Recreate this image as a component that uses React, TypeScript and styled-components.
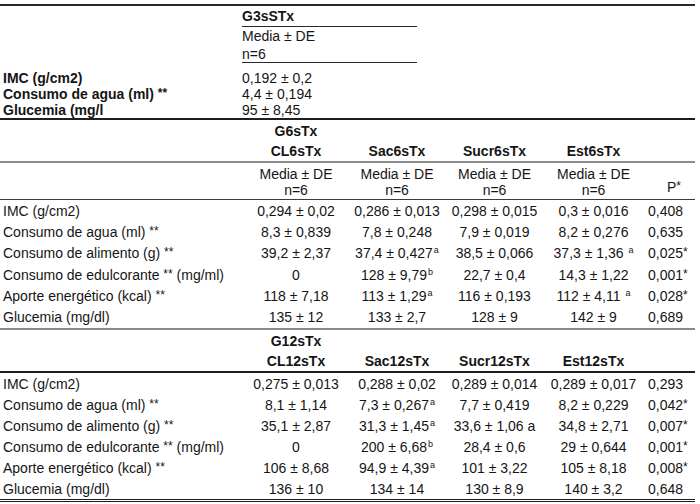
import React from 'react';
import styled, { createGlobalStyle } from 'styled-components';

const GlobalStyle = createGlobalStyle`
  html, body {
    margin: 0;
    padding: 0;
    background: #ffffff;
  }
  body {
    font-family: 'Liberation Sans', Arial, sans-serif;
    color: #151515;
  }
`;

type Row = { label: string; values: string[] };

const week6: Row[] = [
    { label: 'IMC (g/cm2)', values: ['0,294 ± 0,02', '0,286 ± 0,013', '0,298 ± 0,015', '0,3 ± 0,016', '0,408'] },
    { label: 'Consumo de agua (ml) **', values: ['8,3 ± 0,839', '7,8 ± 0,248', '7,9 ± 0,019', '8,2 ± 0,276', '0,635'] },
    { label: 'Consumo de alimento (g) **', values: ['39,2 ± 2,37', '37,4 ± 0,427^a', '38,5 ± 0,066', '37,3 ± 1,36 ^a', '0,025*'] },
    { label: 'Consumo de edulcorante ** (mg/ml)', values: ['0', '128 ± 9,79^b', '22,7 ± 0,4', '14,3 ± 1,22', '0,001*'] },
    { label: 'Aporte energético (kcal) **', values: ['118 ± 7,18', '113 ± 1,29^a', '116 ± 0,193', '112 ± 4,11 ^a', '0,028*'] },
    { label: 'Glucemia (mg/dl)', values: ['135 ± 12', '133 ± 2,7', '128 ± 9', '142 ± 9', '0,689'] },
];

const week12: Row[] = [
    { label: 'IMC (g/cm2)', values: ['0,275 ± 0,013', '0,288 ± 0,02', '0,289 ± 0,014', '0,289 ± 0,017', '0,293'] },
    { label: 'Consumo de agua (ml) **', values: ['8,1 ± 1,14', '7,3 ± 0,267^a', '7,7 ± 0,419', '8,2 ± 0,229', '0,042*'] },
    { label: 'Consumo de alimento (g) **', values: ['35,1 ± 2,87', '31,3 ± 1,45^a', '33,6 ± 1,06 a', '34,8 ± 2,71', '0,007*'] },
    { label: 'Consumo de edulcorante ** (mg/ml)', values: ['0', '200 ± 6,68^b', '28,4 ± 0,6', '29 ± 0,644', '0,001*'] },
    { label: 'Aporte energético (kcal) **', values: ['106 ± 8,68', '94,9 ± 4,39^a', '101 ± 3,22', '105 ± 8,18', '0,008*'] },
    { label: 'Glucemia (mg/dl)', values: ['136 ± 10', '134 ± 14', '130 ± 8,9', '140 ± 3,2', '0,648'] },
];

const week3: Row[] = [
    { label: 'IMC (g/cm2)', values: ['0,192 ± 0,2'] },
    { label: 'Consumo de agua (ml) **', values: ['4,4 ± 0,194'] },
    { label: 'Glucemia (mg/l', values: ['95 ± 8,45'] },
];

// turns "^a" into a superscript and "*" into a small star, wrapped in one span
// so flex cells keep the spaces between the pieces
const renderText = (text: string) => {
    const parts: React.ReactNode[] = [];
    let buf = '';
    for (let i = 0; i < text.length; i++) {
        const ch = text[i];
        if (ch === '^') {
            if (buf) parts.push(buf);
            buf = '';
            parts.push(<Sup key={i}>{text[i + 1]}</Sup>);
            i++;
        } else if (ch === '*') {
            if (buf) parts.push(buf);
            buf = '';
            parts.push(<Star key={i}>*</Star>);
        } else {
            buf += ch;
        }
    }
    if (buf) parts.push(buf);
    return <span>{parts}</span>;
};

const App = () => {
    return (
        <>
            <GlobalStyle />
            <Sheet>
                <Block $rule="2px solid #2a2a2a">
                    <BaseRow $h={21}>
                        <span />
                        <BaseCell $line $bold $end>G3sSTx</BaseCell>
                    </BaseRow>
                    <BaseRow $h={18}>
                        <span />
                        <BaseCell>Media ± DE</BaseCell>
                    </BaseRow>
                    <BaseRow $h={18}>
                        <span />
                        <BaseCell $line>n=6</BaseCell>
                    </BaseRow>
                    <BaseBody>
                        {week3.map((r) => (
                            <BaseRow key={r.label} $h={16}>
                                <BoldLabel>{renderText(r.label)}</BoldLabel>
                                <BaseCell>{r.values[0]}</BaseCell>
                            </BaseRow>
                        ))}
                    </BaseBody>
                </Block>

                <Section
                    rule="2px solid #1e1e1e"
                    group="G6sTx"
                    cols={['CL6sTx', 'Sac6sTx', 'Sucr6sTx', 'Est6sTx']}
                    withStats
                    rows={week6}
                    bodyHeight={128}
                />
                <Section
                    rule="2px solid #8a8a8a"
                    group="G12sTx"
                    cols={['CL12sTx', 'Sac12sTx', 'Sucr12sTx', 'Est12sTx']}
                    rows={week12}
                    bodyHeight={126}
                    last
                />
            </Sheet>
        </>
    );
};

type SectionProps = {
    rule: string;
    group: string;
    cols: string[];
    rows: Row[];
    bodyHeight: number;
    withStats?: boolean;
    last?: boolean;
};

const Section = ({ rule, group, cols, rows, bodyHeight, withStats, last }: SectionProps) => (
    <Block $rule={rule} $bottom={last ? '3px double #1a1a1a' : undefined}>
        <GridRow $h={21}>
            <span />
            <Head>{group}</Head>
        </GridRow>
        <GridRow $h={20} $rule={withStats ? '2px solid #8c8c8c' : '2px solid #1e1e1e'}>
            <span />
            {cols.map((c) => (
                <Head key={c}>{c}</Head>
            ))}
        </GridRow>
        {withStats && (
            <GridRow $h={36} $rule="1px solid #3a3a3a">
                <span />
                {cols.map((c) => (
                    <Stats key={c}>
                        Media ± DE
                        <br />
                        n=6
                    </Stats>
                ))}
                <PHead>{renderText('P*')}</PHead>
            </GridRow>
        )}
        <Body style={{ height: bodyHeight }}>
            {rows.map((r) => (
                <GridRow key={r.label}>
                    <Label>{renderText(r.label)}</Label>
                    {r.values.slice(0, 4).map((v, i) => (
                        <Value key={i}>{renderText(v)}</Value>
                    ))}
                    <PValue>{renderText(r.values[4])}</PValue>
                </GridRow>
            ))}
        </Body>
    </Block>
);

const Sheet = styled.div`
    width: 695px;
    padding-top: 4px;
    font-size: 14px;
    line-height: 16px;
`;

const Block = styled.div<{ $rule: string; $bottom?: string }>`
    display: flex;
    flex-direction: column;
    border-top: ${(p) => p.$rule};
    border-bottom: ${(p) => p.$bottom || 'none'};
`;

/* first block: label column + one value column */
const BaseRow = styled.div<{ $h: number }>`
    display: grid;
    grid-template-columns: 242px 175px;
    height: ${(p) => p.$h}px;
`;

const BaseBody = styled.div`
    padding-top: 7px;
`;

const BaseCell = styled.div<{ $line?: boolean; $bold?: boolean; $end?: boolean }>`
    display: flex;
    align-items: ${(p) => (p.$end ? 'flex-end' : 'center')};
    padding-bottom: ${(p) => (p.$end ? '2px' : '0')};
    font-weight: ${(p) => (p.$bold ? 'bold' : 'normal')};
    border-bottom: ${(p) => (p.$line ? '1px solid #2a2a2a' : 'none')};
    white-space: nowrap;
`;

const BoldLabel = styled.div`
    display: flex;
    align-items: center;
    padding-left: 3px;
    font-weight: bold;
    white-space: nowrap;
`;

/* group sections: label + four groups + P */
const GridRow = styled.div<{ $h?: number; $rule?: string }>`
    display: grid;
    grid-template-columns: 245px 102px 100px 95px 103px 1fr;
    height: ${(p) => (p.$h ? `${p.$h}px` : 'auto')};
    border-bottom: ${(p) => p.$rule || 'none'};
`;

const Body = styled.div`
    display: grid;
    grid-template-rows: repeat(6, 1fr);
`;

const Head = styled.div`
    display: flex;
    align-items: center;
    justify-content: center;
    font-weight: bold;
    white-space: nowrap;
`;

const Stats = styled.div`
    padding-top: 3px;
    text-align: center;
    white-space: nowrap;
`;

const PHead = styled.div`
    display: flex;
    align-items: flex-end;
    justify-content: center;
    padding: 0 0 4px 8px;
`;

const Label = styled.div`
    display: flex;
    align-items: center;
    padding-left: 3px;
    white-space: nowrap;
`;

const Value = styled.div`
    display: flex;
    align-items: center;
    justify-content: center;
    white-space: nowrap;
`;

const PValue = styled.div`
    display: flex;
    align-items: center;
    padding-left: 3px;
    white-space: nowrap;
`;

const Sup = styled.sup`
    font-size: 9px;
    line-height: 0;
    vertical-align: 5px;
    margin-left: 1px;
`;

const Star = styled.span`
    font-size: 12px;
    line-height: 0;
    vertical-align: 2px;
`;

export default App;
